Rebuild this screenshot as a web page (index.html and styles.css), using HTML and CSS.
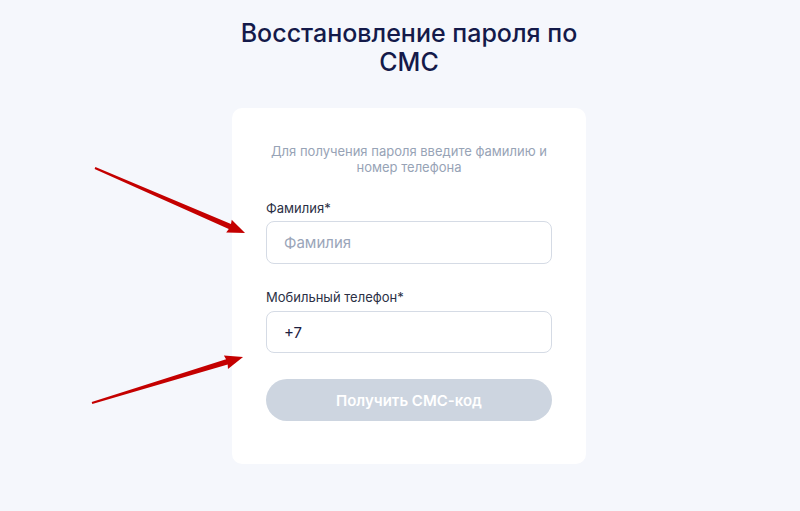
FILE: index.html
```html
<!DOCTYPE html>
<html lang="ru">
<head>
<meta charset="utf-8">
<link rel="stylesheet" href="styles.css">
</head>
<body>
<main class="page">
  <h1 class="title">Восстановление пароля по<br>СМС</h1>
  <section class="card">
    <p class="hint">Для получения пароля введите фамилию и<br>номер телефона</p>
    <label class="field">
      <span class="label">Фамилия*</span>
      <span class="input placeholder">Фамилия</span>
    </label>
    <label class="field">
      <span class="label">Мобильный телефон*</span>
      <span class="input">+7</span>
    </label>
    <button class="btn" type="button">Получить СМС-код</button>
  </section>
</main>
<svg class="arrows" width="800" height="511" viewBox="0 0 800 511" aria-hidden="true">
  <g fill="#c40000">
    <path transform="translate(95 168) rotate(23.43)" d="M0 -1 L147 -2.8 L146 -7 L163.5 0 L146 7 L147 2.8 L0 1 Z"/>
    <path transform="translate(92 403) rotate(-16.94)" d="M0 -1 L141 -2.8 L140 -7 L157.9 0 L140 7 L141 2.8 L0 1 Z"/>
  </g>
</svg>
</body>
</html>
```
FILE: styles.css
```css
* { box-sizing: border-box; }
html, body { margin: 0; padding: 0; }
body {
  background: #f5f7fc;
  font-family: Inter, "Liberation Sans", Arial, sans-serif;
  width: 800px;
  height: 511px;
  overflow: hidden;
  position: relative;
}
.page {
  display: flex;
  flex-direction: column;
  align-items: center;
  padding-left: 18px;
  padding-top: 19px;
}
.title {
  margin: 0;
  font-size: 25px;
  line-height: 29px;
  font-weight: 500;
  color: #141a4a;
  text-align: center;
}
.card {
  margin-top: 31px;
  width: 354px;
  background: #ffffff;
  border-radius: 10px;
  padding: 35px 34px 43px;
  display: flex;
  flex-direction: column;
}
.hint {
  margin: 0 0 25px;
  font-size: 13px;
  line-height: 16px;
  color: #97a3b6;
  text-align: center;
}
.field {
  display: flex;
  flex-direction: column;
  margin-bottom: 25px;
}
.field + .field { margin-bottom: 26px; }
.label {
  font-size: 13px;
  line-height: 16px;
  color: #2b3045;
  margin-bottom: 5px;
}
.field + .field .label { margin-bottom: 6px; }
.input {
  height: 43px;
  border: 1px solid #d5dbe5;
  border-radius: 8px;
  padding: 0 17px;
  display: flex;
  align-items: center;
  font-size: 15px;
  color: #1c2040;
}
.field + .field .input { height: 42px; }
.input.placeholder { color: #9aa5b9; }
.btn {
  height: 42px;
  border: none;
  border-radius: 21px;
  background: #cdd5e0;
  color: #ffffff;
  font-family: inherit;
  font-size: 15px;
  font-weight: 600;
}
.arrows {
  position: absolute;
  left: 0;
  top: 0;
  pointer-events: none;
}
```
